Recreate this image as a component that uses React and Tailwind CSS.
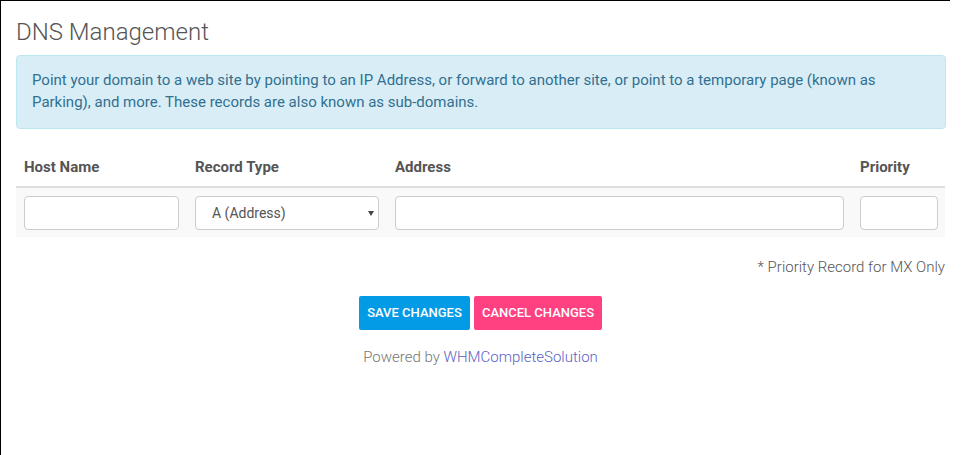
export default function App() {
  const font = { fontFamily: 'Roboto, "Liberation Sans", sans-serif' };
  return (
    <div className="w-[966px] h-[455px] bg-white overflow-hidden" style={font}>
      <div className="w-[950px] h-[455px] border-l border-t border-black">
        <div className="ml-[15px] w-[930px]">
          <h1 className="pt-[15px] text-[24px] leading-[32px] font-light text-[#555]">DNS Management</h1>
          <div className="mt-[7px] h-[74px] rounded-[4px] border border-[#bce8f1] bg-[#d9edf7] px-[15px] pt-[13px] text-[15px] leading-[22px] text-[#31708f]">
            Point your domain to a web site by pointing to an IP Address, or forward to another site, or point to a temporary page (known as Parking), and more. These records are also known as sub-domains.
          </div>
          <table className="mt-[20px] w-[929px] table-fixed border-collapse">
            <thead>
              <tr className="border-b-2 border-[#ddd]">
                <th className="w-[171px] px-[8px] h-[38px] text-left text-[15px] font-bold text-[#555] align-middle">Host Name</th>
                <th className="w-[200px] px-[8px] text-left text-[15px] font-bold text-[#555]">Record Type</th>
                <th className="w-[465px] px-[8px] text-left text-[15px] font-bold text-[#555]">Address</th>
                <th className="w-[93px] px-[8px] text-left text-[15px] font-bold text-[#555]">Priority</th>
              </tr>
            </thead>
            <tbody>
              <tr className="bg-[#f9f9f9]">
                <td className="p-[8px] pb-[7px]">
                  <input className="block w-full h-[34px] rounded-[4px] border border-[#ccc] bg-white" />
                </td>
                <td className="p-[8px] pb-[7px]">
                  <div className="relative">
                    <select className="block w-full h-[34px] appearance-none rounded-[4px] border border-[#ccc] bg-white pl-[16px] text-[14px] text-[#555]" style={font}>
                      <option>A (Address)</option>
                    </select>
                    <svg className="absolute right-[5px] top-[15px] pointer-events-none" width="6" height="5" viewBox="0 0 6 5">
                      <path d="M0 0 L6 0 L3 5 Z" fill="#444" />
                    </svg>
                  </div>
                </td>
                <td className="p-[8px] pb-[7px]">
                  <input className="block w-full h-[34px] rounded-[4px] border border-[#ccc] bg-white" />
                </td>
                <td className="p-[8px] pb-[7px]">
                  <input className="block w-[78px] h-[34px] rounded-[4px] border border-[#ccc] bg-white" />
                </td>
              </tr>
            </tbody>
          </table>
          <p className="mt-[20px] w-[929px] text-right text-[15px] leading-[20px] font-light text-[#555]">* Priority Record for MX Only</p>
          <div className="mt-[19px] w-[929px] flex justify-center gap-[4px]">
            <button className="h-[34px] w-[111px] rounded-[2px] bg-[#039be5] text-[13px] font-medium text-white uppercase">Save Changes</button>
            <button className="h-[34px] w-[128px] rounded-[2px] bg-[#ff4081] text-[13px] font-medium text-white uppercase">Cancel Changes</button>
          </div>
          <p className="mt-[17px] w-[929px] text-center text-[15px] leading-[20px] text-[#777] font-light">
            Powered by <a className="text-[#5c5fc4]">WHMCompleteSolution</a>
          </p>
        </div>
      </div>
    </div>
  );
}
